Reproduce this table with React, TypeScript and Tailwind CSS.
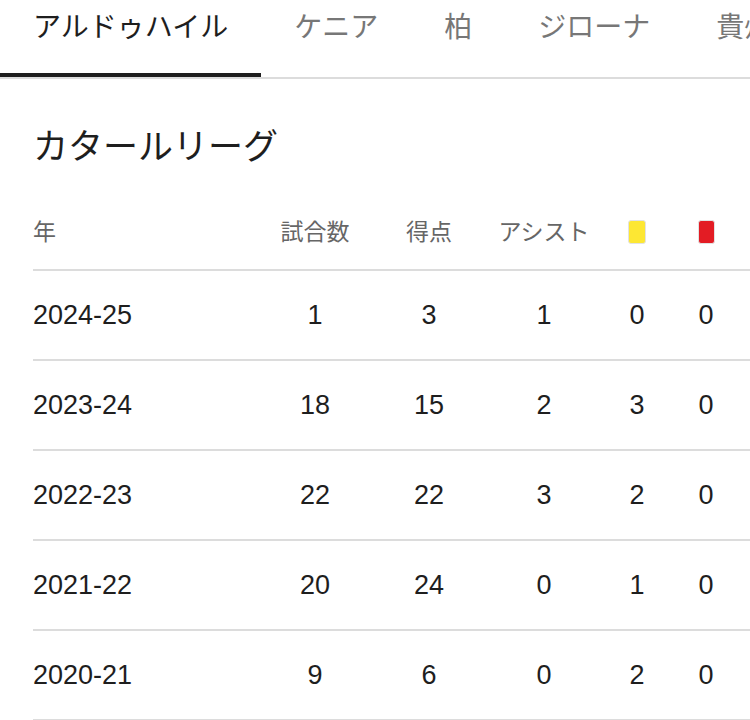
const tabs = ['アルドゥハイル', 'ケニア', '柏', 'ジローナ', '貴州'];

const rows = [
  { season: '2024-25', apps: 1, goals: 3, assists: 1, yellow: 0, red: 0 },
  { season: '2023-24', apps: 18, goals: 15, assists: 2, yellow: 3, red: 0 },
  { season: '2022-23', apps: 22, goals: 22, assists: 3, yellow: 2, red: 0 },
  { season: '2021-22', apps: 20, goals: 24, assists: 0, yellow: 1, red: 0 },
  { season: '2020-21', apps: 9, goals: 6, assists: 0, yellow: 2, red: 0 },
];

const font = "font-['Liberation_Sans','Noto_Sans_CJK_JP',sans-serif]";
const cols = 'grid grid-cols-[215px_134px_94px_136px_50px_88px] w-[760px]';

export default function App() {
  return (
    <div className={`w-[750px] h-[720px] bg-white overflow-hidden ${font}`}>
      {/* tabs */}
      <div className="flex border-b-2 border-[#dcdcdc] whitespace-nowrap">
        {tabs.map((t, i) => (
          <div
            key={t}
            className={`h-[77px] px-[33px] pt-[8px] text-[28px] leading-[40px] border-b-4 shrink-0 ${
              i === 0 ? 'border-[#1e1e1e] text-[#1e1e1e]' : 'border-transparent text-[#777]'
            }`}
          >
            {t}
          </div>
        ))}
      </div>

      <h2 className="ml-[33px] mt-[43px] h-[50px] text-[35px] leading-[50px] text-[#1e1e1e]">
        カタールリーグ
      </h2>

      <div className="ml-[33px]">
        <div className={`${cols} items-start h-[99px] pt-[43px] text-[23px] leading-[34px] text-[#666] border-b-2 border-[#dcdcdc]`}>
          <div>年</div>
          <div className="text-center">試合数</div>
          <div className="text-center">得点</div>
          <div className="text-center">アシスト</div>
          <div className="h-[34px] flex justify-center items-center">
            <span className="w-[18px] h-[24px] rounded-[3px] bg-[#fde733] border border-[#e2e2e2]" />
          </div>
          <div className="h-[34px] flex justify-center items-center">
            <span className="w-[17px] h-[24px] rounded-[3px] bg-[#e31c24] border border-[#e2e2e2]" />
          </div>
        </div>

        {rows.map((r) => (
          <div
            key={r.season}
            className={`${cols} h-[90px] items-center text-[27px] text-[#1e1e1e] border-b-2 border-[#dcdcdc]`}
          >
            <div>{r.season}</div>
            <div className="text-center">{r.apps}</div>
            <div className="text-center">{r.goals}</div>
            <div className="text-center">{r.assists}</div>
            <div className="text-center">{r.yellow}</div>
            <div className="text-center">{r.red}</div>
          </div>
        ))}
      </div>
    </div>
  );
}
